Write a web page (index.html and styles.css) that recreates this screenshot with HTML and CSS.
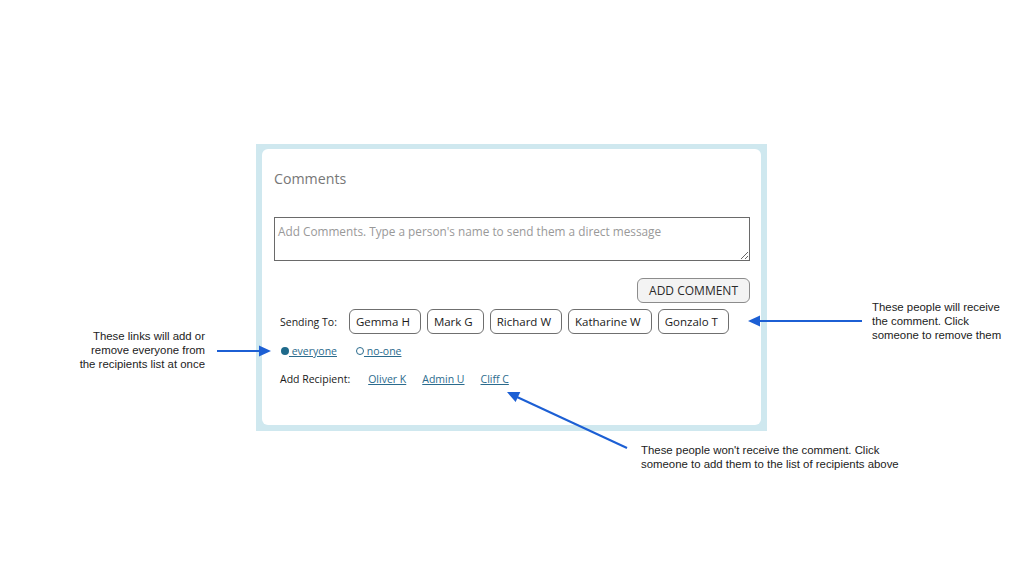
FILE: index.html
```html
<!DOCTYPE html>
<html>
<head>
<meta charset="utf-8">
<link rel="stylesheet" href="styles.css">
</head>
<body>
<div class="page">
  <section class="card">
    <div class="card-inner">
      <h2 class="title">Comments</h2>
      <textarea class="comment-box" placeholder="Add Comments. Type a person's name to send them a direct message"></textarea>
      <div class="actions"><button class="add-btn">ADD COMMENT</button></div>
      <div class="rows">
        <div class="row sending">
          <span class="label">Sending To:</span>
          <div class="chips">
            <span class="chip">Gemma H</span>
            <span class="chip">Mark G</span>
            <span class="chip">Richard W</span>
            <span class="chip">Katharine W</span>
            <span class="chip">Gonzalo T</span>
          </div>
        </div>
        <div class="row toggles">
          <a class="toggle" href="#"><span class="dot filled"></span><span class="ul">&nbsp;everyone</span></a>
          <a class="toggle" href="#"><span class="dot hollow"></span><span class="ul">&nbsp;no-one</span></a>
        </div>
        <div class="row add">
          <span class="label">Add Recipient:</span>
          <div class="links">
            <a href="#">Oliver K</a>
            <a href="#">Admin U</a>
            <a href="#">Cliff C</a>
          </div>
        </div>
      </div>
    </div>
  </section>

  <p class="note note-left">These links will add or<br>remove everyone from<br>the recipients list at once</p>
  <p class="note note-right">These people will receive<br>the comment. Click<br>someone to remove them</p>
  <p class="note note-bottom">These people won't receive the comment. Click<br>someone to add them to the list of recipients above</p>

  <svg class="arrows" width="1023" height="575" viewBox="0 0 1023 575" xmlns="http://www.w3.org/2000/svg">
    <g stroke="#1c5fd4" stroke-width="2" fill="none">
      <line x1="217" y1="351" x2="262" y2="351"/>
      <line x1="862" y1="321" x2="758" y2="321"/>
      <line x1="627" y1="448" x2="517" y2="397"/>
    </g>
    <g fill="#1c5fd4">
      <polygon points="271,351 259,345.5 259,356.5"/>
      <polygon points="748,321 760,315.5 760,326.5"/>
      <polygon points="507,392 515.6,402 520.3,392"/>
    </g>
  </svg>
</div>
</body>
</html>
```

FILE: styles.css
```css
html, body {
  margin: 0;
  padding: 0;
  background: #ffffff;
}

.page {
  position: relative;
  width: 1023px;
  height: 575px;
  overflow: hidden;
  font-family: "Open Sans", "Noto Sans", sans-serif;
  padding-top: 144px;
  padding-left: 256px;
  box-sizing: border-box;
}

.card {
  width: 511px;
  height: 287px;
  box-sizing: border-box;
  background: #cfe8ef;
  padding: 5px 6px 6px 6px;
}

.card-inner {
  height: 100%;
  box-sizing: border-box;
  background: #ffffff;
  border-radius: 6px;
  padding: 20px 12px 0 12px;
  display: flex;
  flex-direction: column;
}

.title {
  margin: 0;
  font-size: 14.2px;
  font-weight: 400;
  line-height: 20px;
  color: #777777;
}

.comment-box {
  margin-top: 28px;
  width: 476px;
  height: 44px;
  box-sizing: border-box;
  border: 1px solid #6a6a6a;
  border-radius: 0;
  padding: 5px 3px 3px 3px;
  font-family: "Open Sans", "Noto Sans", sans-serif;
  font-size: 11.8px;
  line-height: 16px;
  color: #333;
  resize: vertical;
  outline: none;
}

.comment-box::placeholder {
  color: #999999;
}

.actions {
  margin-top: 17px;
  display: flex;
  justify-content: flex-end;
  width: 476px;
}

.add-btn {
  height: 25px;
  padding: 0 11px;
  box-sizing: border-box;
  border: 1px solid #8c8c8c;
  border-radius: 6px;
  background: #f3f3f3;
  font-family: "Open Sans", "Noto Sans", sans-serif;
  font-size: 12px;
  color: #2a2a2a;
  line-height: 23px;
}

.rows {
  padding-left: 6px;
  display: flex;
  flex-direction: column;
}

.row {
  display: flex;
  align-items: center;
}

.sending {
  margin-top: 6px;
  height: 25px;
}

.label {
  font-size: 10.5px;
  color: #1a1a1a;
  line-height: 16px;
  white-space: nowrap;
  flex-shrink: 0;
}

.chips {
  display: flex;
  gap: 6px;
  margin-left: 12px;
}

.chip {
  height: 25px;
  box-sizing: border-box;
  border: 1px solid #6f6f6f;
  border-radius: 6px;
  padding: 0 10px 0 6px;
  font-size: 11.5px;
  line-height: 23px;
  color: #1a1a1a;
  white-space: nowrap;
}

.toggles {
  margin-top: 9px;
  height: 16px;
  gap: 18px;
}

.toggle {
  display: flex;
  align-items: center;
  font-size: 10.5px;
  line-height: 16px;
  color: #2b6b8d;
  text-decoration: none;
  margin-left: 1px;
}

.toggle .ul {
  text-decoration: underline;
}

.dot {
  width: 8px;
  height: 8px;
  box-sizing: border-box;
  border-radius: 50%;
  display: inline-block;
}

.dot.filled {
  background: #1f6a8b;
}

.dot.hollow {
  border: 1.5px solid #2b6b8d;
}

.add {
  margin-top: 12px;
  height: 16px;
}

.links {
  display: flex;
  gap: 16px;
  margin-left: 18px;
}

.links a {
  font-size: 10.5px;
  line-height: 16px;
  color: #2b6b8d;
  text-decoration: underline;
}

.note {
  position: absolute;
  margin: 0;
  font-family: "Liberation Sans", Arial, sans-serif;
  font-size: 11.4px;
  line-height: 14px;
  color: #222222;
}

.note-left {
  right: 818px;
  top: 329px;
  text-align: right;
}

.note-right {
  left: 872px;
  top: 300px;
}

.note-bottom {
  left: 641px;
  top: 443px;
}

.arrows {
  position: absolute;
  left: 0;
  top: 0;
  pointer-events: none;
}
```
